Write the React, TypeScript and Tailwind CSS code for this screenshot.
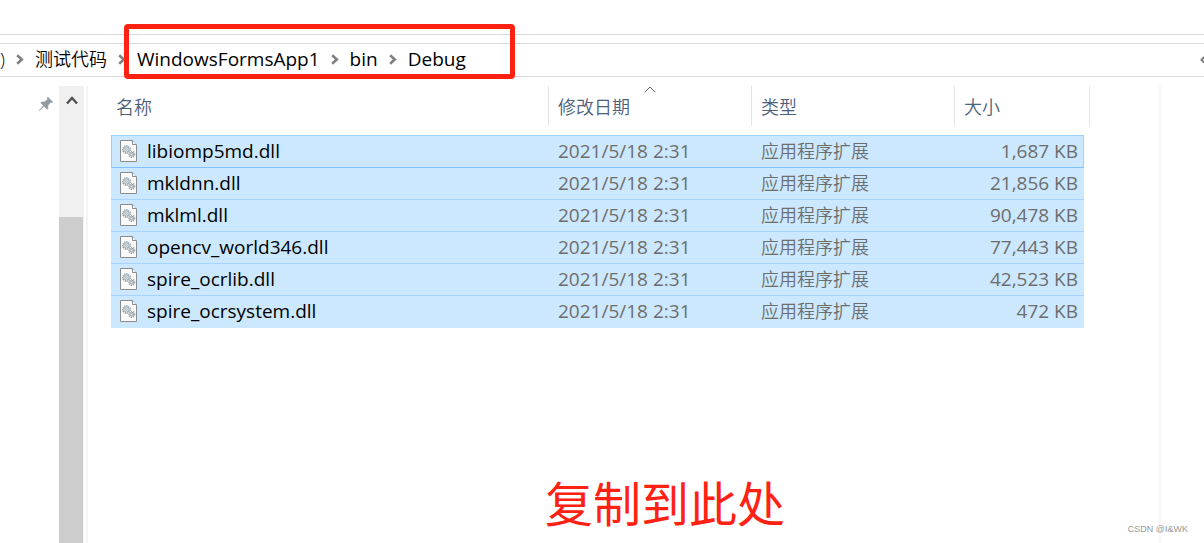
import React from "react";

type FileRow = { name: string; date: string; type: string; size: string };

const files: FileRow[] = [
  { name: "libiomp5md.dll", date: "2021/5/18 2:31", type: "应用程序扩展", size: "1,687 KB" },
  { name: "mkldnn.dll", date: "2021/5/18 2:31", type: "应用程序扩展", size: "21,856 KB" },
  { name: "mklml.dll", date: "2021/5/18 2:31", type: "应用程序扩展", size: "90,478 KB" },
  { name: "opencv_world346.dll", date: "2021/5/18 2:31", type: "应用程序扩展", size: "77,443 KB" },
  { name: "spire_ocrlib.dll", date: "2021/5/18 2:31", type: "应用程序扩展", size: "42,523 KB" },
  { name: "spire_ocrsystem.dll", date: "2021/5/18 2:31", type: "应用程序扩展", size: "472 KB" },
];

function Separator() {
  return (
    <svg className="h-[11px] w-2 shrink-0" viewBox="0 0 8 11" fill="none" aria-hidden="true">
      <path d="M1.2 1.2 5.8 5.5 1.2 9.8" stroke="#808080" strokeWidth="2.6" />
    </svg>
  );
}

function Gear({ cx, cy, r }: { cx: number; cy: number; r: number }) {
  return (
    <g fill="none" stroke="#95a1a9">
      <circle cx={cx} cy={cy} r={r} strokeWidth="1.5" strokeDasharray="1.2 0.9" />
      <circle cx={cx} cy={cy} r={r - 1} fill="#dbe4ea" strokeWidth="0.9" />
      <circle cx={cx} cy={cy} r="0.9" fill="#fff" strokeWidth="0.7" />
    </g>
  );
}

function DllIcon() {
  return (
    <svg className="h-[22px] w-[17px] shrink-0" viewBox="0 0 17 22" aria-hidden="true">
      <path d="M.5.5h12l4 4v17H.5z" fill="#fafafa" stroke="#8c8c8c" />
      <path d="M12.5.5v4h4" fill="#fff" stroke="#8c8c8c" />
      <Gear cx={6.5} cy={9.5} r={3.7} />
      <Gear cx={11.7} cy={14.3} r={2.9} />
    </svg>
  );
}

function PinIcon() {
  return (
    <svg className="h-4 w-4" viewBox="0 0 16 16" aria-hidden="true">
      <path
        d="M9.8.8 15.2 6.2 13.9 7 12.7 6.6 10.3 9.2 10.2 12.6 9.1 13.4 6.1 10.4 1 15.3.6 14.9 5.2 9.5 2.5 6.7 3.4 5.7 6.8 5.6 9.4 3.2 9 2z"
        fill="#8f9ba5"
      />
    </svg>
  );
}

function Header({ label, span, sorted }: { label: string; span?: number; sorted?: boolean }) {
  return (
    <th
      colSpan={span}
      scope="col"
      aria-sort={sorted ? "ascending" : undefined}
      className="group pb-[9px] text-left font-[350]"
    >
      <button
        type="button"
        className="relative flex h-10 w-full items-center border-r border-[#e5e5e5] pt-px pl-[9px] text-lg text-[#4c607a] group-first:pl-[5px]"
      >
        {label}
        {sorted && (
          <svg className="absolute top-0 left-1/2 h-[7px] w-3 -translate-x-1/2" viewBox="0 0 12 7" fill="none" aria-hidden="true">
            <path d="M.8 6.2 6 1l5.2 5.2" stroke="#606060" />
          </svg>
        )}
      </button>
    </th>
  );
}

export default function App() {
  return (
    <div className="relative flex min-h-screen flex-col overflow-hidden bg-white font-['Open_Sans','Noto_Sans_CJK_SC',sans-serif] text-black">
      <div className="h-[35px] border-b border-[#d9d9d9]" />
      <div className="mt-2 flex h-[34px] items-center justify-between border-y border-[#d9d9d9]">
        <nav aria-label="路径" className="flex items-center gap-[11px] pb-0.5 text-[19px] leading-[30px] whitespace-nowrap">
          <span className="w-[5px] text-lg leading-[30px] font-[350]">)</span>
          <Separator />
          <a href="#code" className="text-lg leading-[30px] font-[350]">测试代码</a>
          <Separator />
          <div className="relative flex items-center gap-[11px]">
            <a href="#app">WindowsFormsApp1</a>
            <Separator />
            <a href="#bin">bin</a>
            <Separator />
            <a href="#debug">Debug</a>
            <div className="pointer-events-none absolute -top-5 -left-[13px] h-[55px] w-[391px] rounded-sm border-5 border-[#ff2212]" />
          </div>
        </nav>
        <svg className="h-2 w-1" viewBox="0 0 4 8" fill="none" aria-hidden="true">
          <path d="M4 1 1.5 4 4 6.5" stroke="#808080" strokeWidth="2" />
        </svg>
      </div>

      <div className="mt-[9px] flex flex-1">
        <aside className="flex w-[59px] shrink-0 justify-end pt-2.5 pr-[5px]">
          <PinIcon />
        </aside>
        <div className="flex w-[25px] shrink-0 flex-col bg-[#f0f0f0]">
          <button type="button" aria-label="向上滚动" className="flex h-[131px] items-start justify-center pt-[9px]">
            <svg className="h-[11px] w-3" viewBox="0 0 12 11" fill="none" aria-hidden="true">
              <path d="M1 8.5 6 3l5 5.5" stroke="#505050" strokeWidth="2.4" />
            </svg>
          </button>
          <div className="mr-px flex-1 bg-[#cdcdcd]" />
        </div>
        <div className="ml-0.5 w-0.5 shrink-0 bg-[#f5f5f5]" />

        <main className="min-w-0 flex-1 overflow-hidden pl-[23px]">
          <table className="w-[979px] table-fixed border-separate border-spacing-0">
            <colgroup>
              <col className="w-[438px]" />
              <col className="w-[203px]" />
              <col className="w-[203px]" />
              <col className="w-[129px]" />
              <col className="w-[6px]" />
            </colgroup>
            <thead>
              <tr>
                <Header label="名称" />
                <Header label="修改日期" sorted />
                <Header label="类型" />
                <Header label="大小" span={2} />
              </tr>
            </thead>
            <tbody>
              {files.map((file, i) => {
                const edge =
                  i === 0
                    ? "h-[33px] border-t border-b border-t-[#99d1ff] border-b-[#80c0ff] bg-[#cce8ff] p-0 pb-0.5"
                    : i === files.length - 1
                      ? "h-8 bg-[#cce8ff] p-0 pb-0.5"
                      : "h-8 border-b border-[#a6d4ff] bg-[#cce8ff] p-0 pb-0.5";
                return (
                  <tr key={file.name} className="text-[19px] leading-[28px] whitespace-nowrap text-[#6d6d6d]">
                    <td className={i === 0 ? `${edge} border-l border-l-[#99d1ff]` : edge}>
                      <div
                        className={
                          i === 0
                            ? "flex items-center gap-2.5 pl-2 text-black"
                            : "flex items-center gap-2.5 pl-[9px] text-black"
                        }
                      >
                        <DllIcon />
                        {file.name}
                      </div>
                    </td>
                    <td className={edge}>
                      <div className="pl-[9px]">{file.date}</div>
                    </td>
                    <td className={edge}>
                      <div className="pl-[9px] text-lg leading-[28px] font-[350]">{file.type}</div>
                    </td>
                    <td className={i === 0 ? `${edge} border-r border-r-[#99d1ff]` : edge}>
                      <div className={i === 0 ? "pr-[5px] text-right" : "pr-1.5 text-right"}>{file.size}</div>
                    </td>
                    <td className="p-0" />
                  </tr>
                );
              })}
            </tbody>
          </table>
          <p className="mt-36 pl-[434px] text-5xl leading-[64px] text-[#ff2212]">复制到此处</p>
        </main>
        <div className="w-[45px] shrink-0 border-l-2 border-[#f7f7f7]" />
      </div>

      <small className="absolute right-4 bottom-2 font-['Liberation_Sans',sans-serif] text-[9px] leading-3 text-[#999999]">
        CSDN @I&amp;WK
      </small>
    </div>
  );
}
